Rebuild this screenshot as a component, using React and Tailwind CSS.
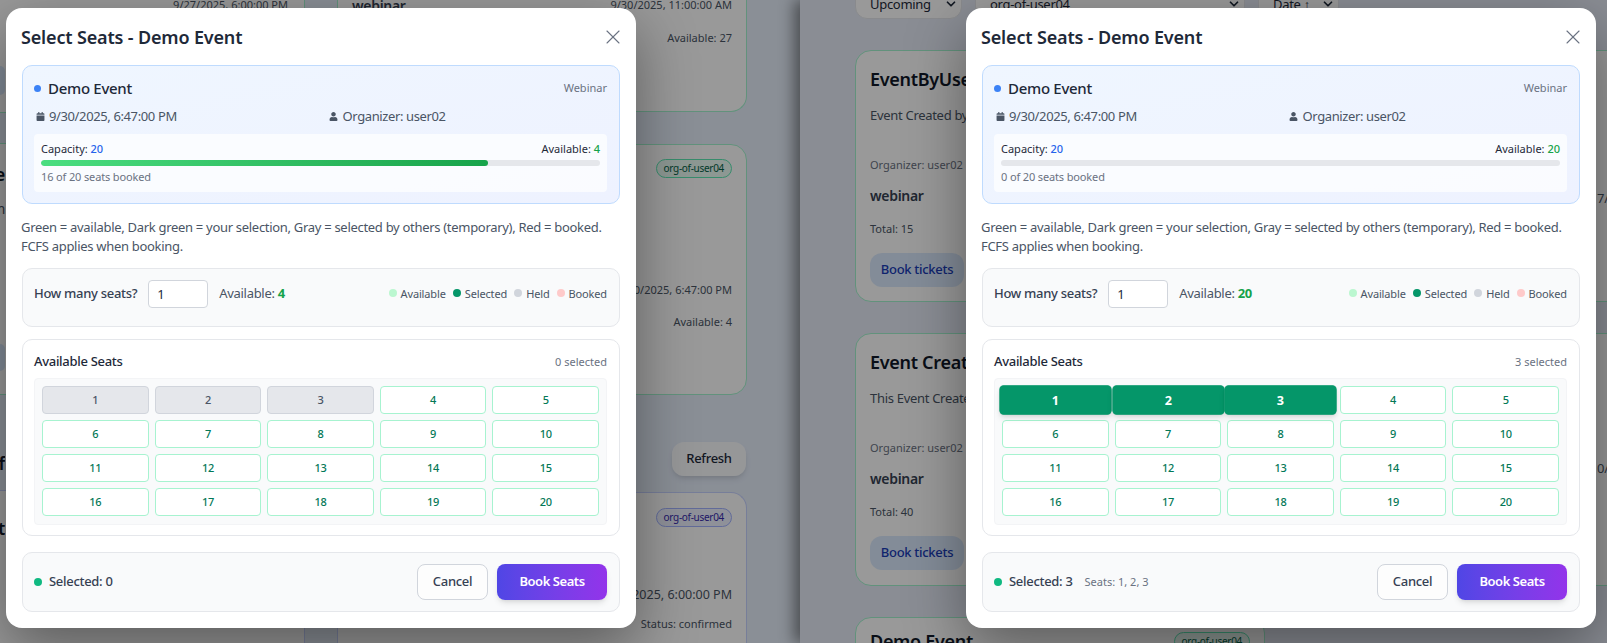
import { X, ChevronDown } from "lucide-react";
import { FaCalendar, FaUser } from "react-icons/fa";

const seats = Array.from({ length: 20 }, (_, i) => i + 1);

function Legend({ color, label }) {
  return (
    <div className="flex items-center gap-[4px]">
      <span className={`w-[8px] h-[8px] rounded-full -mt-[2px] ${color}`} />
      <span className="text-[11px] leading-4 tracking-[-0.14px] text-gray-600">{label}</span>
    </div>
  );
}

function Seat({ n, state }) {
  if (state === "held") {
    return (
      <button className="h-[28px] pt-[1px] rounded-[4px] border border-gray-300 bg-gray-200 text-[11px] text-gray-600 font-medium">
        {n}
      </button>
    );
  }
  if (state === "mine") {
    return (
      <button className="h-[28px] pt-[1px] rounded-[4px] border border-[#059669] bg-[#059669] text-[12px] text-white font-bold scale-105 shadow-md">
        {n}
      </button>
    );
  }
  return (
    <button className="h-[28px] pt-[1px] rounded-[4px] border border-[#a7f3d0] bg-white text-[11px] text-[#047857] font-medium">
      {n}
    </button>
  );
}

function SeatModal({ className, booked, available, selected, seatState, seatsNote }) {
  return (
    <div className={`absolute top-2 w-[630px] h-[620px] bg-white rounded-2xl shadow-[0_20px_60px_rgba(0,0,0,0.4)] px-4 ${className}`}>
      <div className="flex items-center justify-between h-[57px] -mr-[5px] -ml-[1px] pt-[1px]">
        <h2 className="text-[18px] font-semibold tracking-[-0.16px] text-gray-800">Select Seats - Demo Event</h2>
        <X size={24} strokeWidth={1.1} className="text-gray-500" />
      </div>

      <div className="rounded-[10px] border border-[#bfdbfe] bg-gradient-to-br from-[#eff6ff] to-[#eef2ff] pl-[11px] pr-3 pt-[10px] pb-[11px]">
        <div className="flex items-center justify-between h-6">
          <div className="flex items-center gap-[7px]">
            <span className="w-[7px] h-[7px] rounded-full bg-[#3b82f6]" />
            <span className="text-[15px] font-medium text-gray-800">Demo Event</span>
          </div>
          <span className="mt-[1px] text-[11px] tracking-normal text-gray-500">Webinar</span>
        </div>
        <div className="grid grid-cols-2 gap-4 mt-[6px] text-[13px] leading-5 tracking-[-0.38px] text-gray-600">
          <div className="flex items-center gap-[4px] pl-[2px]">
            <FaCalendar size={9} className="text-gray-600" />
            <span>9/30/2025, 6:47:00 PM</span>
          </div>
          <div className="flex items-center gap-[5px]">
            <FaUser size={9} className="text-gray-600" />
            <span>Organizer: user02</span>
          </div>
        </div>
        <div className="mt-[8px] rounded-[4px] bg-white/70 px-[7px] py-[7px]">
          <div className="flex justify-between text-[11px] leading-4 tracking-normal text-gray-800">
            <span>
              Capacity: <span className="text-[#2563eb] font-medium">20</span>
            </span>
            <span>
              Available: <span className="text-[#16a34a] font-medium">{available}</span>
            </span>
          </div>
          <div className="mt-[3px] h-[6px] rounded-full bg-gray-200 overflow-hidden">
            <div className="h-full rounded-full bg-gradient-to-r from-[#4ade80] to-[#16a34a]" style={{ width: `${(booked / 20) * 100}%` }} />
          </div>
          <div className="mt-[3px] text-[11px] leading-4 tracking-[-0.14px] text-gray-500">{booked} of 20 seats booked</div>
        </div>
      </div>

      <p className="mt-[14px] text-[13px] leading-[19px] text-gray-600 -ml-[1px]">
        Green = available, Dark green = your selection, Gray = selected by others (temporary), Red = booked. FCFS applies when booking.
      </p>

      <div className="mt-3 h-[59px] rounded-[10px] border border-gray-200 bg-gray-50 pl-[11px] pr-3 pt-[11px] flex items-start justify-between">
        <div className="flex items-center h-[28px]">
          <label className="text-[13px] font-medium text-gray-700">How many seats?</label>
          <input readOnly value="1" className="ml-[11px] w-[60px] h-[28px] rounded-[4px] border border-gray-300 bg-white px-[8px] text-[13px] text-gray-800" />
          <span className="ml-[11px] text-[13px] text-gray-600">
            Available: <span className="font-bold text-[#16a34a]">{available}</span>
          </span>
        </div>
        <div className="flex items-center gap-[7px] h-[28px]">
          <Legend color="bg-[#bbf7d0]" label="Available" />
          <Legend color="bg-[#059669]" label="Selected" />
          <Legend color="bg-gray-300" label="Held" />
          <Legend color="bg-[#fecaca]" label="Booked" />
        </div>
      </div>

      <div className="mt-3 h-[197px] rounded-[10px] border border-gray-200 bg-white pl-[11px] pr-3 pt-3">
        <div className="flex items-center justify-between h-5">
          <span className="text-[13px] font-medium text-gray-800">Available Seats</span>
          <span className="text-[11px] tracking-normal text-gray-500">{selected} selected</span>
        </div>
        <div className="mt-[6px] rounded-[4px] border border-gray-100 bg-gray-50 pt-[7px] pb-[8px] px-[7px] grid grid-cols-5 gap-[6px]">
          {seats.map((n) => (
            <Seat key={n} n={n} state={seatState(n)} />
          ))}
        </div>
      </div>

      <div className="mt-4 h-[60px] rounded-[10px] border border-gray-200 bg-gray-50 pl-[11px] pr-3 flex items-center justify-between">
        <div className="flex items-center">
          <span className="w-[8px] h-[8px] rounded-full bg-[#10b981]" />
          <span className="ml-[7px] text-[13px] font-medium text-gray-700">Selected: {selected}</span>
          {seatsNote && <span className="ml-3 text-[11px] tracking-normal text-gray-500">{seatsNote}</span>}
        </div>
        <div className="flex items-center gap-[9px]">
          <button className="w-[71px] h-[36px] rounded-lg border border-gray-300 bg-white/60 text-[13px] font-medium text-gray-700">Cancel</button>
          <button className="w-[110px] h-[36px] rounded-lg bg-gradient-to-r from-[#4f46e5] to-[#9333ea] text-[13px] font-semibold tracking-[-0.45px] text-white shadow-md">Book Seats</button>
        </div>
      </div>
    </div>
  );
}

function Tag({ tone, children }) {
  const cls = tone === "indigo" ? "border-indigo-300 bg-indigo-50 text-indigo-800" : "border-emerald-300 bg-emerald-50 text-emerald-800";
  return (
    <div className="flex justify-end">
      <span className={`h-[19px] rounded-full border px-[7px] text-[10px] leading-[17px] ${cls}`}>{children}</span>
    </div>
  );
}

function Stub({ className, children }) {
  // only the last letters of this text show past the modal's left edge
  return (
    <div className={`w-[5px] flex justify-end overflow-hidden whitespace-nowrap ${className}`}>
      <span>{children}</span>
    </div>
  );
}

function LeftPage() {
  return (
    <div className="absolute inset-0 bg-[#e6eefb] grid grid-cols-[305px_410px] gap-x-8 items-start text-gray-800">
      <div className="flex flex-col">
        <div className="-mt-[40px] h-[153px] rounded-br-2xl bg-white border-b border-r border-emerald-200">
          <div className="pt-[35px] text-right pr-4 text-[11px] leading-5 tracking-normal text-gray-600">9/27/2025, 6:00:00 PM</div>
          <div className="mt-[51px] w-[5px] h-[29px] bg-blue-100 rounded-r-lg" />
        </div>
        <div className="mt-[30px] h-[252px] rounded-r-2xl bg-white border-y border-r border-emerald-200">
          <Stub className="mt-[18px] text-[18px] leading-6 font-semibold text-gray-900">Some Name</Stub>
          <Stub className="mt-[13px] text-[14px] leading-5 text-gray-600">Webinar Program</Stub>
          <div className="mt-[125px] w-[5px] h-[27px] bg-blue-100 rounded-r-lg" />
        </div>
        <Stub className="mt-[56px] text-[18px] leading-6 font-semibold text-gray-900">Event Conf</Stub>
        <div className="mt-[15px] h-[200px] rounded-tr-2xl bg-white border-t border-r border-indigo-200">
          <Stub className="mt-[25px] text-[18px] leading-6 font-semibold text-gray-900">Event</Stub>
        </div>
      </div>

      <div className="flex flex-col">
        <div className="-mt-[40px] h-[152px] rounded-b-2xl bg-white border border-t-0 border-emerald-200 px-[14px] pt-[35px]">
          <div className="flex justify-between h-5 items-center">
            <span className="text-[14px] font-semibold text-gray-700">webinar</span>
            <span className="text-[11px] tracking-normal text-gray-600">9/30/2025, 11:00:00 AM</span>
          </div>
          <div className="mt-[15px] text-right text-[11px] leading-4 tracking-normal text-gray-600">Available: 27</div>
        </div>
        <div className="mt-[32px] h-[251px] rounded-2xl bg-white border border-emerald-200 px-[14px] pt-[14px] text-right">
          <Tag tone="emerald">org-of-user04</Tag>
          <div className="mt-[102px] text-[11px] leading-5 tracking-normal text-gray-600">9/30/2025, 6:47:00 PM</div>
          <div className="mt-[14px] text-[11px] leading-4 tracking-normal text-gray-600">Available: 4</div>
        </div>
        <button className="mt-[47px] self-end mr-[1px] w-[74px] h-[34px] rounded-xl bg-white/80 shadow-md text-[13px] font-medium text-gray-800">Refresh</button>
        <div className="mt-[16px] h-[200px] rounded-t-2xl bg-white border border-b-0 border-indigo-200 px-[14px] pt-[15px] text-right">
          <Tag tone="indigo">org-of-user04</Tag>
          <div className="mt-[58px] text-[12.5px] leading-5 tracking-normal text-gray-600">9/30/2025, 6:00:00 PM</div>
          <div className="mt-[11px] text-[11px] leading-4 tracking-normal text-gray-600">Status: confirmed</div>
        </div>
      </div>
    </div>
  );
}

function EventCard({ title, desc, total, className }) {
  return (
    <div className={`rounded-2xl bg-white border border-emerald-200 px-[14px] pt-[14px] ${className}`}>
      <h3 className="text-[18px] leading-7 font-semibold text-gray-900 whitespace-nowrap">{title}</h3>
      <p className="mt-3 text-[13px] leading-5 text-gray-600 whitespace-nowrap">{desc}</p>
      <p className="mt-8 text-[11px] leading-4 tracking-normal text-gray-500">Organizer: user02</p>
      <p className="mt-[13px] text-[14px] leading-5 font-semibold text-gray-700">webinar</p>
      <p className="mt-[15px] text-[11px] leading-4 tracking-normal text-gray-600">Total: {total}</p>
      <button className="mt-4 w-[94px] h-[34px] rounded-xl bg-blue-100 text-[13px] font-medium text-blue-800">Book tickets</button>
    </div>
  );
}

function Select({ className, children }) {
  return (
    <div className={`h-[36px] rounded-xl bg-white border border-gray-200 flex items-end justify-between px-[14px] pb-[4px] text-[13px] text-gray-800 ${className}`}>
      <span>{children}</span>
      <ChevronDown size={14} strokeWidth={3} className="mb-[3px] -mr-[11px]" />
    </div>
  );
}

function RightPage() {
  return (
    <div className="absolute inset-0 bg-[#e6ecf7] pl-[55px] text-gray-800">
      <div className="flex gap-[13px] -mt-[17px]">
        <Select className="w-[107px]">Upcoming</Select>
        <Select className="w-[270px]">org-of-user04</Select>
        <Select className="w-[81px]">Date ↑</Select>
      </div>
      <div className="mt-[31px] grid grid-cols-[410px_410px] gap-x-8 gap-y-[31px] items-start">
        <EventCard className="h-[252px]" title="EventByUser02" desc="Event Created by user02" total="15" />
        <div className="h-[252px] rounded-2xl bg-white border border-emerald-200 pl-[299px] pt-[137px] text-[13px] leading-5 text-gray-600 whitespace-nowrap">7/30/2025</div>
        <EventCard className="h-[253px]" title="Event Created" desc="This Event Created by user02" total="40" />
        <div className="h-[253px] rounded-2xl bg-white border border-emerald-200 pl-[299px] pt-[124px] text-[13px] leading-5 text-gray-600 whitespace-nowrap">0/30/2025</div>
        <div className="h-[200px] rounded-2xl bg-white border border-emerald-200 px-[14px] pt-[9px] flex justify-between items-start">
          <h3 className="text-[18px] leading-7 font-semibold text-gray-900">Demo Event</h3>
          <div className="mt-[5px]">
            <Tag tone="emerald">org-of-user04</Tag>
          </div>
        </div>
      </div>
    </div>
  );
}

export default function App() {
  return (
    <div className="flex w-[1607px] h-[643px] overflow-hidden tracking-[-0.3px] font-['Noto_Sans',sans-serif]">
      <div className="relative w-[800px] h-full overflow-hidden">
        <LeftPage />
        <div className="absolute inset-0 bg-black/40" />
        <SeatModal className="left-[6px]" booked={16} available={4} selected={0} seatState={(n) => (n <= 3 ? "held" : "free")} />
      </div>
      <div className="relative z-10 flex-1 h-full overflow-hidden shadow-[-6px_0_14px_rgba(0,0,0,0.45)]">
        <RightPage />
        <div className="absolute inset-0 bg-black/40" />
        <SeatModal className="left-[166px]" booked={0} available={20} selected={3} seatState={(n) => (n <= 3 ? "mine" : "free")} seatsNote="Seats: 1, 2, 3" />
      </div>
    </div>
  );
}
